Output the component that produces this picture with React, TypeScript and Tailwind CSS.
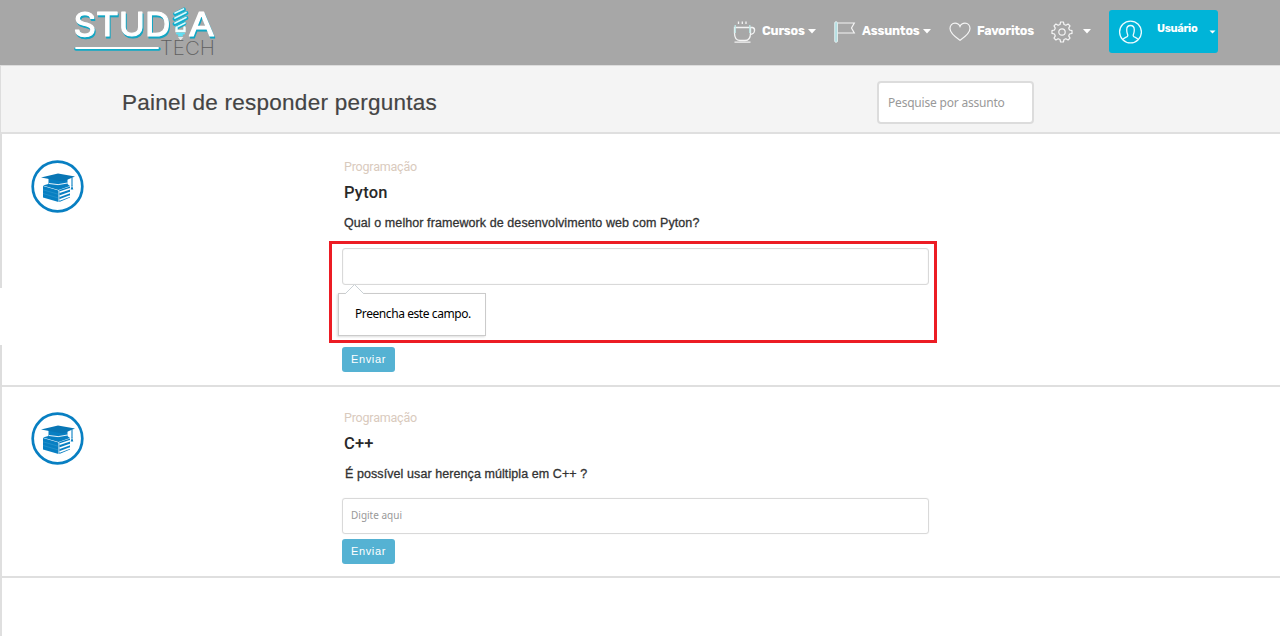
import type { ReactNode } from "react";

function Logo() {
  return (
    <svg width="150" height="60" viewBox="0 0 150 60" className="block shrink-0" role="img" aria-label="Studia Tech">
      <g className="drop-shadow-[1.5px_2px_0px_#11a5c3]" fontFamily="Inter, 'Liberation Sans', sans-serif" fontWeight="400" fontSize="32.500" strokeLinejoin="round" fill="#ffffff" stroke="#ffffff" strokeWidth="1.1">
        <text x="2.500" y="32.500" textLength="97" lengthAdjust="spacingAndGlyphs">STUD</text>
        <text x="117.500" y="32.500" textLength="26" lengthAdjust="spacingAndGlyphs">A</text>
      </g>
      <path d="M5 46H88" stroke="#0eaac8" strokeWidth="3.600" strokeLinecap="round" />
      <path d="M5 45H87" stroke="#fff" strokeWidth="1.800" strokeLinecap="round" />
      <g fill="none" strokeLinecap="round">
        <path d="M104 11L113 6.500M103.500 16L115.500 10M103.500 21L115.500 15M106 24.500L113.500 20.500" stroke="#0cb0cf" strokeWidth="3.800" />
        <path d="M104 10L112.500 6M104 15L115 9.500M104 20L115 14.500M107 23.500L114 20" stroke="#d9f9ff" strokeWidth="1.700" />
        <path d="M105.500 24.500V28H113.500V24.500" stroke="#f2ffff" strokeWidth="2.400" />
        <path d="M106 30.500H113M108 32.500H111" stroke="#5fe0f4" strokeWidth="2" />
      </g>
      <path d="M107 34H112.500L109.500 37.500Z" fill="#e8e8e8" />
      <text x="89" y="51.500" textLength="55" lengthAdjust="spacingAndGlyphs" fontFamily="Inter, sans-serif" fontWeight="200" fontSize="19.500" fill="#5f5f5f">TECH</text>
    </svg>
  );
}

function CupIcon() {
  return (
    <svg width="23" height="24" viewBox="0 0 23 24" fill="none" stroke="#f4f4f4" strokeWidth="1.3" className="block shrink-0">
      <path d="M1.500 7.500H17.500V13Q17.500 20.500 12 20.500H7Q1.500 20.500 1.500 13Z" />
      <path d="M17.500 7.500H19.500Q22 8 21.500 11Q21 14 17.300 14.500M1.500 22.200H17.500" />
      <path d="M5.500 1.500V4M9.300 1.500V4M13 1.500V4" />
      <path d="M2.200 5V13M16.800 5V13" stroke="#bfe9e8" />
    </svg>
  );
}

function FlagIcon() {
  return (
    <svg width="22" height="22" viewBox="0 0 22 22" fill="none" className="block shrink-0">
      <rect x="0.700" y="0.700" width="2.800" height="20.600" rx="1.200" fill="#b4dfe2" stroke="#ecf5f5" strokeWidth="0.800" />
      <path d="M4 2H20.300L17.500 7L20.300 12H4" stroke="#f4f4f4" strokeWidth="1.200" />
    </svg>
  );
}

function HeartIcon() {
  return (
    <svg width="22" height="20" viewBox="0 0 22 20" fill="none" stroke="#f5f5f5" strokeWidth="1.200" className="block shrink-0">
      <path d="M11 18.300C7 15.500 1 11.500 1 6.500C1 3.300 3.200 1.200 6 1.200C8.500 1.200 10.200 2.600 11 4.400C11.800 2.600 13.500 1.200 16 1.200C18.800 1.200 21 3.300 21 6.500C21 11.500 15 15.500 11 18.300Z" />
    </svg>
  );
}

function GearIcon() {
  return (
    <svg width="22" height="22" viewBox="0 0 22 22" fill="none" stroke="#f5f5f5" strokeWidth="1.200" strokeLinejoin="round" className="block shrink-0">
      <path d="M9.600 1H12.400L13 3.500L14.900 4.300L17.100 3L19 4.900L17.700 7.100L18.500 9L21 9.600V12.400L18.500 13L17.700 14.900L19 17.100L17.100 19L14.900 17.700L13 18.500L12.400 21H9.600L9 18.500L7.100 17.700L4.900 19L3 17.100L4.300 14.900L3.500 13L1 12.400V9.600L3.500 9L4.300 7.100L3 4.900L4.900 3L7.100 4.300L9 3.500Z" />
      <circle cx="11" cy="11" r="3.200" />
    </svg>
  );
}

function UserIcon() {
  return (
    <svg width="24" height="24" viewBox="0 0 24 24" fill="none" stroke="#ecfbff" strokeWidth="1.300" className="block shrink-0">
      <circle cx="12.500" cy="12" r="10.900" />
      <path d="M5 19.500C5.700 17.500 9.800 17.300 9.800 15.700C9.800 14.300 8.700 13.300 8.700 9.800C8.700 7.200 10.200 5.500 12.500 5.500C14.800 5.500 16.300 7.200 16.300 9.800C16.300 13.300 15.200 14.300 15.200 15.700C15.200 17.300 19.300 17.500 20 19.500" />
    </svg>
  );
}

function Caret() {
  return (
    <svg width="8" height="5" viewBox="0 0 8 5" className="block shrink-0">
      <path d="M0 0H8L4 4.500Z" fill="#fff" />
    </svg>
  );
}

function BooksIcon() {
  return (
    <svg width="54" height="54" viewBox="0 0 54 54" className="block shrink-0">
      <circle cx="27.500" cy="27.500" r="24.800" fill="#fff" stroke="#087fc2" strokeWidth="2.700" />
      <path d="M13 27L28.500 31.500V43L13 38.500Z" fill="#087fc2" />
      <path d="M13 26.500L20 24.500L36 24L40 27L28.500 31Z" fill="#087fc2" />
      <path d="M29.300 31L40 27.500V38.500L29.300 43Z" fill="#087fc2" />
      <path d="M29.500 33.200L40 29.800M29.500 37.200L40 33.500M29.500 41L40 37" stroke="#fff" strokeWidth="1.500" />
      <path d="M13 30.800L28.500 35.300M13 34.500L28.500 39" stroke="#3b9ed0" strokeWidth="0.500" />
      <path d="M18.500 19H37.500V26Q28 30 18.500 26Z" fill="#087fc2" />
      <path d="M19 24.500Q28 27 37.500 24" stroke="#fff" strokeWidth="0.900" fill="none" />
      <path d="M11 18.500L28 14.500L45 17.500L33 22.500Z" fill="#0876b5" />
      <path d="M42 18.500V27" stroke="#087fc2" strokeWidth="1.100" />
      <path d="M42 26L40.700 30.500H43.300Z" fill="#087fc2" />
    </svg>
  );
}

function SendButton() {
  return (
    <button className="block h-[25px] w-[53px] rounded-[3px] bg-[#55b2d3] font-['Liberation_Sans',sans-serif] text-[11px] leading-[25px] tracking-[0.6px] text-white">
      Enviar
    </button>
  );
}

function Question({ className, iconClassName, title, question, children }: { className: string; iconClassName: string; title: string; question: ReactNode; children: ReactNode }) {
  return (
    <section className={className}>
      <div className={iconClassName}><BooksIcon /></div>
      <div className="w-[587px] shrink-0">
        <p className="ml-[2px] h-[18px] font-[Roboto,sans-serif] text-[12.5px] leading-[18px] tracking-[-0.2px] text-[#d9cabd]">Programação</p>
        <h2 className="ml-[2px] mt-[6px] h-[22px] font-[Roboto,sans-serif] text-[16.5px] leading-[22px] font-medium tracking-[0.2px] text-[#292929]">{title}</h2>
        {question}
        {children}
      </div>
    </section>
  );
}

export default function App() {
  return (
    <div className="flex h-[636px] w-[1280px] flex-col overflow-hidden bg-white">
      <header className="flex h-[65px] shrink-0 items-start bg-[#a7a7a7] font-[Rubik,Inter,sans-serif] text-[12.5px] font-bold text-white">
        <div className="ml-[71px] w-[662px] pt-[3px]"><Logo /></div>
        <nav className="flex h-[63px] items-center">
          <a className="flex w-[101px] items-center"><CupIcon /><span className="ml-[6px] w-[46px] whitespace-nowrap tracking-[-0.2px]">Cursos</span><Caret /></a>
          <a className="flex w-[115px] items-center"><FlagIcon /><span className="ml-[6px] w-[61px] whitespace-nowrap tracking-[-0.2px]">Assuntos</span><Caret /></a>
          <a className="flex w-[102px] items-center"><HeartIcon /><span className="ml-[6px] whitespace-nowrap tracking-[-0.25px]">Favoritos</span></a>
          <a className="flex w-[58px] items-center gap-[10px]"><GearIcon /><Caret /></a>
        </nav>
        <button className="mt-[10px] flex h-[43px] w-[109px] items-center rounded-[3px] bg-[#00b4d8] pl-[9px]">
          <UserIcon />
          <span className="mb-[5px] ml-[15px] w-[52px] text-left text-[11px] tracking-[-0.3px]">Usuário</span>
          <svg width="7" height="4" viewBox="0 0 7 4" className="mt-[1px] block"><path d="M0.500 0.500H6.500L3.500 3.500Z" fill="#fff" /></svg>
        </button>
      </header>

      <div className="flex h-[69px] shrink-0 items-center border-t border-b-2 border-l border-t-[#dddddd] border-b-[#dfdfdf] border-l-[#dddddd] bg-[#f4f4f4]">
        <h1 className="ml-[121px] mt-[7px] w-[755px] font-['Liberation_Sans',sans-serif] text-[22.5px] leading-[30px] tracking-[0.25px] text-[#444] [-webkit-text-stroke:0.2px_#444]">Painel de responder perguntas</h1>
        <div className="mt-[7px] flex h-[43px] w-[157px] items-center rounded-[4px] border-2 border-[#dcdcdc] bg-white pl-[9px] font-['Noto_Sans',sans-serif] text-[12px] tracking-[-0.2px] text-[#999]">Pesquise por assunto</div>
      </div>

      <div className="flex shrink-0">
        <div className="flex w-[2px] shrink-0 flex-col bg-[#dddddd]">
          <div className="mt-[154px] h-[57px] bg-white" />
        </div>
        <Question
          className="flex h-[253px] w-[1278px] border-b-2 border-[#dfdfdf] pt-[24px] pl-[28px]"
          iconClassName="w-[312px] shrink-0 pt-[1px]"
          title="Pyton"
          question={<p className="ml-[2px] mt-[10px] h-[18px] whitespace-nowrap font-['Liberation_Sans',sans-serif] text-[12.5px] leading-[18px] tracking-[0.08px] text-[#333] [-webkit-text-stroke:0.3px_#333]">Qual o melhor framework de desenvolvimento web com Pyton?</p>}
        >
          <div className="relative mt-[16px] mb-[62px] h-[37px] rounded-[3px] border border-[#d9d9d9] shadow-[inset_0_0_1px_#d5d5d5]">
            <div className="pointer-events-none absolute top-[-8px] left-[-14px] h-[102px] w-[608px] border-[3px] border-[#ec1c24]" />
            <div className="absolute top-[44px] left-[-5px] flex h-[43px] w-[148px] items-center border border-[#cbcbcb] bg-white pb-[2px] pl-[16px] font-['Noto_Sans',sans-serif] text-[12px] text-black shadow-[-1px_1px_2px_#dddddd]">
              <svg width="20" height="10" viewBox="0 0 20 10" className="absolute top-[-10px] left-[6px]"><path d="M0 10L9.500 0.500L19 10" fill="#fff" stroke="#cbd2d6" /></svg>
              <span className="whitespace-nowrap tracking-[-0.42px]">Preencha este campo.</span>
            </div>
          </div>
          <SendButton />
        </Question>
      </div>

      <Question
        className="flex h-[191px] w-[1280px] shrink-0 border-b-2 border-l-2 border-[#dfdfdf] pt-[22px] pl-[28px]"
        iconClassName="w-[312px] shrink-0 pt-[2px]"
        title="C++"
        question={<p className="ml-[3px] mt-[10px] h-[18px] whitespace-nowrap font-['Liberation_Sans',sans-serif] text-[12.5px] leading-[18px] tracking-[0.08px] text-[#333] [-webkit-text-stroke:0.3px_#333]">É possível usar herença múltipla em C++ ?</p>}
      >
        <div className="mt-[15px] mb-[5px] flex h-[36px] items-center rounded-[3px] border border-[#d9d9d9] pb-[2px] pl-[8px] font-['Noto_Sans',sans-serif] text-[10px] text-[#999] shadow-[0_0_1px_#dddddd]">Digite aqui</div>
        <SendButton />
      </Question>
      <div className="flex-1 border-l-2 border-[#dfdfdf]" />
    </div>
  );
}
